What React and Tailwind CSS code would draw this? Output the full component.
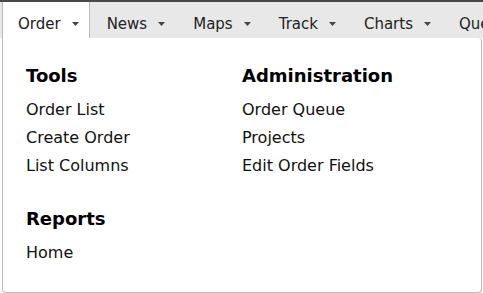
import React from 'react';

const tabs = ['Order', 'News', 'Maps', 'Track', 'Charts', 'Queue'];

function Caret() {
  return (
    <svg width="7" height="4" viewBox="0 0 7 4" className="ml-[11px] shrink-0">
      <path d="M0 0h7L3.5 4z" fill="#444" />
    </svg>
  );
}

const columns = [
  { title: 'Tools', links: ['Order List', 'Create Order', 'List Columns'] },
  { title: 'Administration', links: ['Order Queue', 'Projects', 'Edit Order Fields'] },
];

function Section({ title, links }) {
  return (
    <div>
      <h3 className="text-[18px] leading-[24px] font-bold text-black mb-[8px]">{title}</h3>
      <ul>
        {links.map((l) => (
          <li key={l} className="text-[16px] leading-[28px] text-[#111] cursor-pointer hover:underline">{l}</li>
        ))}
      </ul>
    </div>
  );
}

export default function App() {
  return (
    <div className="w-[483px] h-[293px] bg-white overflow-hidden" style={{ fontFamily: '"DejaVu Sans", Verdana, sans-serif' }}>
      <div className="h-[2px] bg-[#4a4a4a]" />
      <nav className="flex h-[36px] bg-[#e8e8e8] pl-[2px] whitespace-nowrap">
        {tabs.map((t, i) => (
          <div
            key={t}
            className={`flex items-start pt-[12px] pr-[10px] text-[15px] leading-[20px] text-[#222] border-r ${i === 0 ? 'bg-white border-[#bbb] border-l pl-[15px]' : 'border-transparent pl-[17px]'}`}
          >
            <span>{t}</span>
            <span className="h-[20px] flex items-center"><Caret /></span>
          </div>
        ))}
      </nav>
      <div className="ml-[2px] mr-[1px] h-[255px] border border-t-0 border-[#bbb] rounded-b-[4px] rounded-tr-[4px] pl-[23px] pt-[26px]">
        <div className="grid grid-cols-[216px_1fr]">
          {columns.map((c) => (
            <Section key={c.title} {...c} />
          ))}
        </div>
        <div className="mt-[27px]">
          <Section title="Reports" links={['Home']} />
        </div>
      </div>
    </div>
  );
}
